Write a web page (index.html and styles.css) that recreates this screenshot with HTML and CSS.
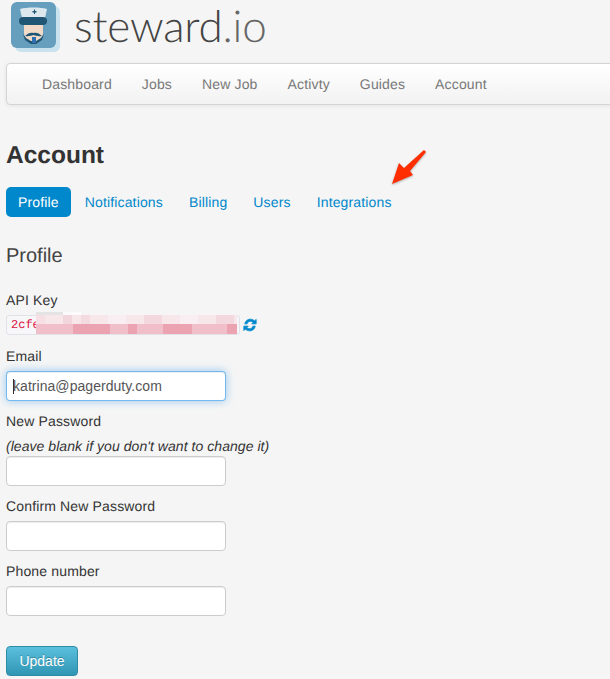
FILE: index.html
```html
<!DOCTYPE html>
<html>
<head>
    <title>steward.io</title>
    <link rel="stylesheet" href="styles.css">
</head>
<body>
    <div class="brand">
        <svg class="brand-icon" width="50" height="50" viewBox="0 0 50 50">
            <rect x="4" y="4" width="45" height="46" rx="6" fill="#c8e2ee"/>
            <rect x="0" y="0" width="45" height="46" rx="6" fill="#659fbd"/>
            <path d="M13 22h19v9c0 5-4 9-9.500 9S13 36 13 31z" fill="#f1dac8"/>
            <path d="M12 32l2 6 6 4h5l6-4 2-6-3 4-5 3h-5l-5-3z" fill="#1f5673"/>
            <path d="M9 7C16 5 29 5 36 7l-2 9H11z" fill="#dde8ee"/>
            <rect x="8" y="15" width="28" height="8" rx="4" fill="#1f5673"/>
            <path d="M21.500 9h1.500V7.500h1V9h1.500v1.500H24V12h-1v-1.500h-1.500z" fill="#1f5673"/>
            <path d="M14 34c3-3 6-4 8.500-3 2.500-1 5.500 0 8.500 3-3 .5-6 0-8.500-1-2.500 1-5.500 1.500-8.500 1z" fill="#1f5673"/>
            <rect x="21" y="35" width="4" height="6" fill="#2f6fb0"/>
        </svg>
        <span class="brand-name">steward<span class="brand-tld">.io</span></span>
    </div>

    <div class="navbar">
        <a href="#">Dashboard</a>
        <a href="#">Jobs</a>
        <a href="#">New Job</a>
        <a href="#">Activty</a>
        <a href="#">Guides</a>
        <a href="#">Account</a>
    </div>

    <h1 class="page-title">Account</h1>

    <div class="tabs-row">
        <div class="tabs">
            <a href="#" class="active">Profile</a>
            <a href="#">Notifications</a>
            <a href="#">Billing</a>
            <a href="#">Users</a>
            <a href="#">Integrations</a>
        </div>
        <svg class="arrow" width="44" height="40" viewBox="0 0 44 40">
            <path d="M6 36L13 15 18 20 38 2 40 4 24 23 27 27z" fill="#ff2e00"/>
        </svg>
    </div>

    <h2 class="section-title">Profile</h2>

    <form class="profile-form">
        <label>API Key</label>
        <div class="api-key">
            <div class="key-box">
                <code>2cfe</code>
                <svg class="redact" width="201" height="22" viewBox="0 0 201 22">
                    <rect x="0" y="0" width="27" height="4" fill="#e4e4e4"/>
                    <rect x="27" y="0" width="18" height="4" fill="#fbfbfb"/>
                    <rect x="0" y="3" width="201" height="9" fill="#f7e6ea"/>
                    <rect x="0" y="3" width="9" height="9" fill="#f6e0e6"/>
                    <rect x="27" y="3" width="9" height="9" fill="#f2d6dd"/>
                    <rect x="45" y="3" width="9" height="9" fill="#f4dbe1"/>
                    <rect x="72" y="3" width="18" height="9" fill="#f9eef1"/>
                    <rect x="108" y="3" width="18" height="9" fill="#f3d8df"/>
                    <rect x="144" y="3" width="18" height="9" fill="#f9eef1"/>
                    <rect x="180" y="3" width="18" height="9" fill="#f3d8df"/>
                    <rect x="0" y="12" width="201" height="10" fill="#f0bfca"/>
                    <rect x="37" y="12" width="37" height="10" fill="#eba3b1"/>
                    <rect x="92" y="12" width="9" height="10" fill="#eba3b1"/>
                    <rect x="127" y="12" width="29" height="10" fill="#eba3b1"/>
                    <rect x="191" y="12" width="10" height="10" fill="#eba3b1"/>
                </svg>
            </div>
            <svg class="refresh" width="14" height="14" viewBox="0 0 24 24">
                <path d="M3 10C4 5 8 2 12.500 2c3 0 5.500 1.300 7.500 3l2.500-2.500V10h-7.500l2.500-2.500C16 6.300 14.500 5.500 12.500 5.500 10 5.500 7.500 7.500 7 10z" fill="#0088cc" stroke="#0088cc" stroke-width="1.500"/>
                <path d="M21 14c-1 5-5 8-9.500 8-3 0-5.500-1.300-7.500-3l-2.500 2.500V14H9l-2.500 2.500c1.500 1.200 3 2 5 2 2.500 0 5-2 5.500-4.500z" fill="#0088cc" stroke="#0088cc" stroke-width="1.500"/>
            </svg>
        </div>

        <label>Email</label>
        <div class="focused-field">
            <input type="text" class="focused" value="katrina@pagerduty.com">
            <span class="caret"></span>
        </div>

        <label class="spaced">New Password</label>
        <p class="hint">(leave blank if you don't want to change it)</p>
        <input type="password">

        <label class="spaced">Confirm New Password</label>
        <input type="password">

        <label class="spaced">Phone number</label>
        <input type="text">

        <button type="button">Update</button>
    </form>
</body>
</html>
```
FILE: styles.css
```css
/* Base */
html, body {
    overflow: hidden;
}
body {
    font-family: "Liberation Sans", Arial, sans-serif;
    font-size: 14px;
    line-height: 20px;
    color: #333;
    margin: 0;
    padding: 0 6px;
    background-color: #f5f5f5;
    text-rendering: geometricPrecision;
}

/* Logo */
.brand {
    display: flex;
    align-items: flex-start;
    height: 63px;
    padding-left: 5px;
    box-sizing: border-box;
}
.brand-icon {
    margin-top: 2px;
}
.brand-name {
    font-family: Lato, sans-serif;
    font-weight: 300;
    font-size: 44px;
    line-height: 53px;
    letter-spacing: -0.2px;
    color: #444;
    margin-left: 13px;
}
.brand-tld {
    color: #666;
}

/* Top nav */
.navbar {
    display: flex;
    height: 42px;
    box-sizing: border-box;
    margin-right: -20px;
    padding-left: 20px;
    background: linear-gradient(#ffffff, #f2f2f2);
    border: 1px solid #d4d4d4;
    border-radius: 4px;
    box-shadow: 0 1px 4px rgba(0, 0, 0, 0.065);
}
.navbar a {
    color: #777;
    text-decoration: none;
    padding: 10px 15px;
    letter-spacing: 0.15px;
}

.page-title {
    font-size: 24.500px;
    line-height: 40px;
    font-weight: bold;
    color: #333;
    margin: 31px 0 0;
}

/* Tabs */
.tabs-row {
    position: relative;
    margin-top: 11px;
}
.tabs {
    display: flex;
    gap: 2px;
}
.tabs a {
    color: #0088cc;
    text-decoration: none;
    padding: 5px 12px;
    height: 20px;
    border-radius: 5px;
    letter-spacing: 0.15px;
}
.tabs a.active {
    color: #fff;
    background-color: #0088cc;
}
.arrow {
    position: absolute;
    left: 380px;
    top: -39px;
    filter: drop-shadow(0 1px 1px rgba(0, 0, 0, 0.3));
}

.section-title {
    font-size: 20px;
    line-height: 30px;
    font-weight: normal;
    color: #444;
    margin: 24px 0 0;
}

/* Form */
.profile-form {
    margin-top: 19px;
}
.profile-form label {
    display: block;
    line-height: 20px;
    margin-bottom: 5px;
    letter-spacing: 0.15px;
}
.profile-form label.spaced {
    margin-top: 10px;
}
.hint {
    font-style: italic;
    margin: 0;
    letter-spacing: 0.05px;
}
.profile-form input {
    display: block;
    width: 220px;
    height: 30px;
    box-sizing: border-box;
    padding: 4px 6px;
    font-family: "Liberation Sans", Arial, sans-serif;
    font-size: 14px;
    letter-spacing: 0.05px;
    color: #555;
    background-color: #fff;
    border: 1px solid #ccc;
    border-radius: 4px;
    box-shadow: inset 0 1px 1px rgba(0, 0, 0, 0.075);
}
.profile-form input.focused {
    border-color: rgba(82, 168, 236, 0.8);
    box-shadow: inset 0 1px 1px rgba(0, 0, 0, 0.075), 0 0 8px rgba(82, 168, 236, 0.6);
}
.focused-field {
    position: relative;
    width: 220px;
}
.caret {
    position: absolute;
    left: 7px;
    top: 8px;
    width: 1px;
    height: 15px;
    background-color: #333;
}

.api-key {
    display: flex;
    align-items: center;
    height: 20px;
    margin-top: 1px;
    margin-bottom: 11px;
}
.key-box {
    position: relative;
    width: 234px;
    height: 20px;
    box-sizing: border-box;
    padding: 0 4px;
    background-color: #f7f7f9;
    border: 1px solid #e1e1e8;
    border-radius: 3px;
}
.key-box code {
    display: block;
    font-family: "Liberation Mono", monospace;
    font-size: 12px;
    line-height: 18px;
    color: #dd1144;
}
.redact {
    position: absolute;
    left: 29px;
    top: -4px;
}
.refresh {
    margin-left: 3px;
}

.profile-form button {
    display: block;
    margin-top: 30px;
    width: 72px;
    height: 30px;
    padding: 0;
    font-family: "Liberation Sans", Arial, sans-serif;
    font-size: 14px;
    color: #fff;
    text-shadow: 0 -1px 0 rgba(0, 0, 0, 0.25);
    background: linear-gradient(#5bc0de, #2f96b4);
    border: 1px solid #2f8aa6;
    border-radius: 4px;
}
```
